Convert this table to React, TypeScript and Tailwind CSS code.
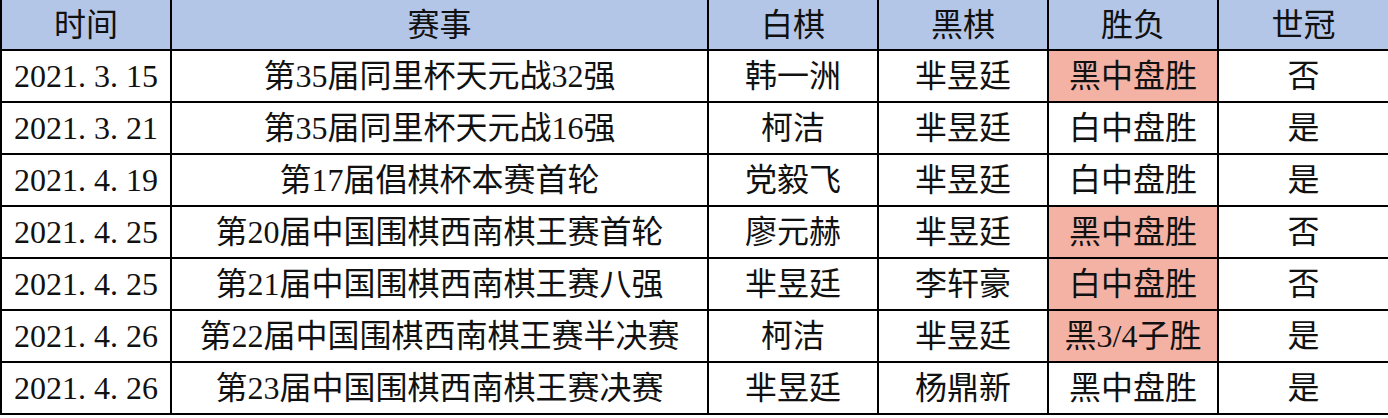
import React from "react";

const rows: { date: string; event: string; white: string; black: string; result: string; hl: boolean; wc: string }[] = [
  { date: "2021.3.15", event: "第35届同里杯天元战32强", white: "韩一洲", black: "芈昱廷", result: "黑中盘胜", hl: true, wc: "否" },
  { date: "2021.3.21", event: "第35届同里杯天元战16强", white: "柯洁", black: "芈昱廷", result: "白中盘胜", hl: false, wc: "是" },
  { date: "2021.4.19", event: "第17届倡棋杯本赛首轮", white: "党毅飞", black: "芈昱廷", result: "白中盘胜", hl: false, wc: "是" },
  { date: "2021.4.25", event: "第20届中国围棋西南棋王赛首轮", white: "廖元赫", black: "芈昱廷", result: "黑中盘胜", hl: true, wc: "否" },
  { date: "2021.4.25", event: "第21届中国围棋西南棋王赛八强", white: "芈昱廷", black: "李轩豪", result: "白中盘胜", hl: true, wc: "否" },
  { date: "2021.4.26", event: "第22届中国围棋西南棋王赛半决赛", white: "柯洁", black: "芈昱廷", result: "黑3/4子胜", hl: true, wc: "是" },
  { date: "2021.4.26", event: "第23届中国围棋西南棋王赛决赛", white: "芈昱廷", black: "杨鼎新", result: "黑中盘胜", hl: false, wc: "是" },
];

function DateText({ d }: { d: string }) {
  const parts = d.split(".");
  return (
    <span>
      {parts.map((p, i) => (
        <React.Fragment key={i}>
          {p}
          {i < parts.length - 1 && <span className="mr-[0.25em]">.</span>}
        </React.Fragment>
      ))}
    </span>
  );
}

const font = { fontFamily: '"Liberation Serif", "Noto Sans CJK SC", serif' };

export default function App() {
  const headers = ["时间", "赛事", "白棋", "黑棋", "胜负", "世冠"];
  const cell = "flex items-center justify-center border-b-2 border-black text-[32px] leading-none text-[#111]";
  return (
    <div className="w-[1388px] h-[418px] bg-white overflow-hidden" style={font}>
      <div className="grid grid-cols-[172px_537px_170px_170px_170px_169px]">
        {headers.map((h, i) => (
          <div
            key={h}
            className={`${cell} h-[51px] bg-[#b4c6e7] ${i === 0 ? "border-l-2" : ""} ${i < 5 ? "border-r-2" : ""}`}
          >
            {h}
          </div>
        ))}
        {rows.map((r, ri) => (
          <React.Fragment key={ri}>
            <div className={`${cell} h-[52px] border-l-2 border-r-2 text-[31px]`}>
              <DateText d={r.date} />
            </div>
            <div className={`${cell} h-[52px] border-r-2`}>{r.event}</div>
            <div className={`${cell} h-[52px] border-r-2`}>{r.white}</div>
            <div className={`${cell} h-[52px] border-r-2`}>{r.black}</div>
            <div className={`${cell} h-[52px] border-r-2 ${r.hl ? "bg-[#f4b2a5]" : ""}`}>{r.result}</div>
            <div className={`${cell} h-[52px]`}>{r.wc}</div>
          </React.Fragment>
        ))}
      </div>
    </div>
  );
}
